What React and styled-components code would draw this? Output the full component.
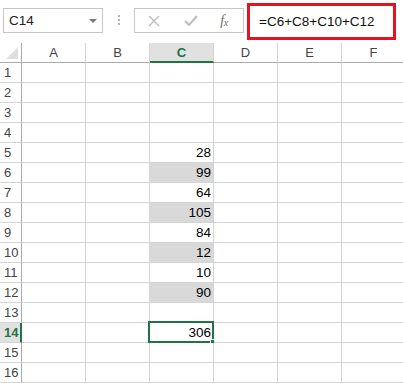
import React from 'react';
import styled, { createGlobalStyle } from 'styled-components';

const GlobalStyle = createGlobalStyle`
  html, body {
    margin: 0;
    padding: 0;
    background: #ffffff;
  }
  body {
    font-family: "Liberation Sans", Arial, sans-serif;
    overflow: hidden;
  }
`;

const GREEN = '#217346';
const COLS = ['A', 'B', 'C', 'D', 'E', 'F'];
const ROWS = Array.from({ length: 16 }, (_, i) => i + 1);

const values = {
  5: { v: 28 },
  6: { v: 99, fill: true },
  7: { v: 64 },
  8: { v: 105, fill: true },
  9: { v: 84 },
  10: { v: 12, fill: true },
  11: { v: 10 },
  12: { v: 90, fill: true },
  14: { v: 306, active: true },
};

const Page = styled.div`
  width: 403px;
  height: 383px;
  overflow: hidden;
  display: flex;
  flex-direction: column;
`;

const Toolbar = styled.div`
  height: 43px;
  display: flex;
  align-items: flex-start;
  box-sizing: border-box;
  padding-left: 3px;
`;

const NameBox = styled.div`
  margin-top: 8px;
  width: 100px;
  height: 25px;
  box-sizing: border-box;
  border: 1px solid #c6c6c6;
  display: flex;
  align-items: center;
  justify-content: space-between;
  padding: 0 5px 0 5px;
  font-size: 13.5px;
  color: #222;
`;

const Caret = styled.span`
  width: 0;
  height: 0;
  border-left: 4px solid transparent;
  border-right: 4px solid transparent;
  border-top: 4px solid #7a7a7a;
`;

const Dots = styled.div`
  margin: 15px 0 0 0;
  width: 31px;
  display: flex;
  flex-direction: column;
  align-items: center;
  gap: 2px;
  span {
    width: 2px;
    height: 2px;
    background: #b5b5b5;
  }
`;

const ButtonBox = styled.div`
  margin-top: 8px;
  width: 110px;
  height: 25px;
  box-sizing: border-box;
  border: 1px solid #c6c6c6;
  display: flex;
  align-items: center;
`;

const ToolButton = styled.span`
  width: ${({ $w }) => $w}px;
  display: flex;
  justify-content: center;
  align-items: center;
`;

const Fx = styled.span`
  font-family: "Liberation Serif", "Times New Roman", serif;
  font-style: italic;
  font-size: 14px;
  color: #6e6e6e;
  letter-spacing: -0.5px;
  sub {
    font-size: 10px;
    vertical-align: -1px;
  }
`;

const FormulaBox = styled.div`
  margin: 3px 0 0 3px;
  width: 149px;
  height: 37px;
  box-sizing: border-box;
  border: 3px solid #e5131f;
  display: flex;
  align-items: center;
  padding-left: 9px;
  font-size: 13.5px;
  color: #111;
  white-space: nowrap;
`;

const Grid = styled.div`
  display: grid;
  grid-template-columns: 22px repeat(6, 64px);
  grid-auto-rows: 20px;
`;

const Corner = styled.div`
  box-sizing: border-box;
  border-right: 1px solid #ababab;
  border-bottom: 1px solid #ababab;
  display: flex;
  align-items: flex-end;
  justify-content: flex-end;
  padding: 0 3px 3px 0;
  &::after {
    content: '';
    width: 0;
    height: 0;
    border-left: 12px solid transparent;
    border-bottom: 12px solid #dfdfdf;
  }
`;

const ColHead = styled.div`
  box-sizing: border-box;
  border-right: 1px solid #d4d4d4;
  border-bottom: ${({ $active }) => ($active ? `2px solid ${GREEN}` : '1px solid #ababab')};
  background: ${({ $active }) => ($active ? '#e1e1e1' : '#ffffff')};
  color: ${({ $active }) => ($active ? GREEN : '#444')};
  font-weight: ${({ $active }) => ($active ? 'bold' : 'normal')};
  font-size: 13px;
  display: flex;
  align-items: center;
  justify-content: center;
  padding-top: ${({ $active }) => ($active ? 1 : 0)}px;
`;

const RowHead = styled.div`
  box-sizing: border-box;
  border-right: ${({ $active }) => ($active ? `2px solid ${GREEN}` : '1px solid #ababab')};
  border-bottom: 1px solid #d4d4d4;
  background: ${({ $active }) => ($active ? '#e1e1e1' : '#ffffff')};
  color: ${({ $active }) => ($active ? GREEN : '#444')};
  font-weight: ${({ $active }) => ($active ? 'bold' : 'normal')};
  font-size: 13px;
  line-height: 19px;
  padding-left: 4px;
`;

const Cell = styled.div`
  position: relative;
  box-sizing: border-box;
  border-right: 1px solid #d4d4d4;
  border-bottom: 1px solid #d4d4d4;
  background: ${({ $fill }) => ($fill ? '#d9d9d9' : '#ffffff')};
  font-size: 13.5px;
  line-height: 20px;
  text-align: right;
  padding-right: 2px;
  color: #000;
`;

const Selection = styled.div`
  position: absolute;
  left: -2px;
  top: -2px;
  right: -1px;
  bottom: -1px;
  border: 2px solid ${GREEN};
  pointer-events: none;
  &::after {
    content: '';
    position: absolute;
    right: -4px;
    bottom: -4px;
    width: 5px;
    height: 5px;
    background: ${GREEN};
    border: 1px solid #fff;
    border-width: 1px 0 0 1px;
  }
`;

const CrossIcon = () => (
  <svg width="12" height="12" viewBox="0 0 12 12">
    <path d="M1 1 L11 11 M11 1 L1 11" stroke="#bcbcbc" strokeWidth="1.4" fill="none" />
  </svg>
);

const CheckIcon = () => (
  <svg width="14" height="11" viewBox="0 0 14 11">
    <path d="M1 6 L5 10 L13 1" stroke="#bcbcbc" strokeWidth="2" fill="none" />
  </svg>
);

export default function App() {
  return (
    <Page>
      <GlobalStyle />
      <Toolbar>
        <NameBox>
          <span>C14</span>
          <Caret />
        </NameBox>
        <Dots>
          <span />
          <span />
          <span />
        </Dots>
        <ButtonBox>
          <ToolButton $w={38}>
            <CrossIcon />
          </ToolButton>
          <ToolButton $w={36}>
            <CheckIcon />
          </ToolButton>
          <ToolButton $w={30}>
            <Fx>
              f<sub>x</sub>
            </Fx>
          </ToolButton>
        </ButtonBox>
        <FormulaBox>=C6+C8+C10+C12</FormulaBox>
      </Toolbar>
      <Grid>
        <Corner />
        {COLS.map((c) => (
          <ColHead key={c} $active={c === 'C'}>
            {c}
          </ColHead>
        ))}
        {ROWS.map((r) => {
          const item = values[r];
          return (
            <React.Fragment key={r}>
              <RowHead $active={r === 14}>{r}</RowHead>
              {COLS.map((c) => {
                const here = c === 'C' && item;
                return (
                  <Cell key={c} $fill={Boolean(here && item.fill)}>
                    {here ? item.v : ''}
                    {here && item.active && <Selection />}
                  </Cell>
                );
              })}
            </React.Fragment>
          );
        })}
      </Grid>
    </Page>
  );
}
